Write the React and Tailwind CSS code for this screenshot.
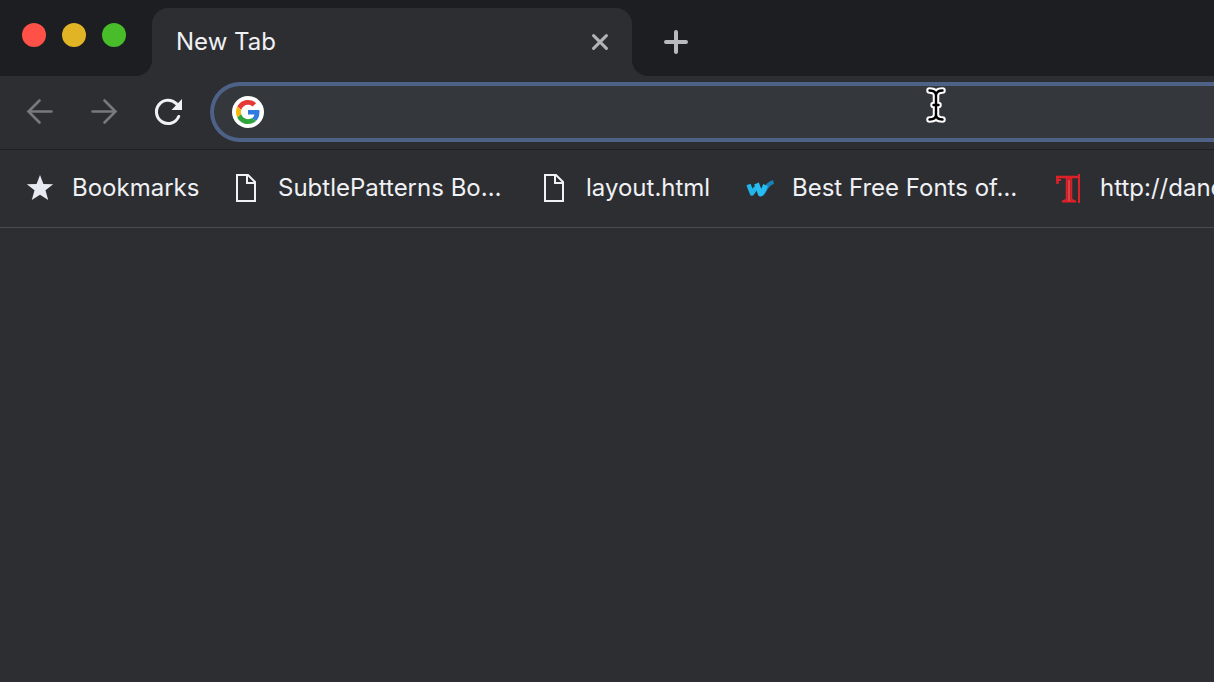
import { useState } from "react";

function BackIcon() {
  return (
    <svg viewBox="0 0 32 32" className="size-8" fill="none" stroke="currentColor" strokeWidth="2.6" strokeLinecap="round" aria-hidden="true">
      <path d="M27.500 15.500H4.500M15.500 4.500 4.500 15.500 15.500 26.500" />
    </svg>
  );
}

function ForwardIcon() {
  return (
    <svg viewBox="0 0 32 32" className="size-8" fill="none" stroke="currentColor" strokeWidth="2.6" strokeLinecap="round" aria-hidden="true">
      <path d="M4.500 15.500h23M16.500 4.500l11 11-11 11" />
    </svg>
  );
}

function ReloadIcon() {
  return (
    <svg viewBox="0 0 32 32" className="size-8" fill="none" aria-hidden="true">
      <path d="M26.700 20.500A11.600 11.600 0 1 1 24.300 7.700L26 9.500" stroke="currentColor" strokeWidth="3.100" strokeLinecap="round" />
      <path d="M30 3v11H19.500z" fill="currentColor" />
    </svg>
  );
}

function CloseIcon() {
  return (
    <svg viewBox="0 0 16 16" className="size-4" stroke="currentColor" strokeWidth="3" strokeLinecap="round" aria-hidden="true">
      <path d="m1.600 1.600 12.800 12.800M14.400 1.600 1.600 14.400" />
    </svg>
  );
}

function PlusIcon() {
  return (
    <svg viewBox="0 0 24 24" className="size-6" stroke="currentColor" strokeWidth="4" strokeLinecap="round" aria-hidden="true">
      <path d="M12 2v20M2 12h20" />
    </svg>
  );
}

function GoogleIcon() {
  return (
    <svg viewBox="0 0 48 48" className="size-6" aria-hidden="true">
      <path fill="#e53935" d="M24 9.500c3.540 0 6.710 1.220 9.210 3.600l6.850-6.850C35.900 2.380 30.470 0 24 0 14.620 0 6.510 5.380 2.560 13.220l7.980 6.190C12.430 13.720 17.740 9.500 24 9.500z" />
      <path fill="#2f7be0" d="M46.980 24.550c0-1.570-.15-3.090-.38-4.550H24v9.020h12.940c-.58 2.960-2.260 5.480-4.780 7.180l7.730 6c4.510-4.180 7.090-10.360 7.090-17.650z" />
      <path fill="#f6b60b" d="M10.530 28.590c-.48-1.450-.76-2.990-.76-4.590s.27-3.140.76-4.590l-7.980-6.190C.92 16.460 0 20.120 0 24c0 3.880.92 7.540 2.560 10.780l7.970-6.190z" />
      <path fill="#2fa33c" d="M24 48c6.480 0 11.930-2.130 15.890-5.810l-7.730-6c-2.150 1.450-4.920 2.300-8.160 2.300-6.260 0-11.570-4.220-13.470-9.910l-7.980 6.190C6.510 42.620 14.620 48 24 48z" />
    </svg>
  );
}

function StarIcon() {
  return (
    <svg viewBox="0 0 32 32" className="size-8" fill="#e8eaf2" aria-hidden="true">
      <path d="m16 3 3.400 8.900 9.800.4-7.700 6 2.700 9.700L16 22.700 7.800 28l2.700-9.700-7.700-6 9.800-.4z" />
    </svg>
  );
}

function PageIcon() {
  return (
    <svg viewBox="0 0 32 32" className="size-8" fill="none" stroke="#f1f1f5" strokeWidth="2" aria-hidden="true">
      <path d="M7 3h11l7 7v19H7zM17 3v8h8" />
    </svg>
  );
}

function FontsIcon() {
  return (
    <svg viewBox="0 0 32 32" className="size-8" fill="none" strokeLinejoin="round" aria-hidden="true">
      <path d="M17.500 22.500c5-3 3-10 12-12.500" stroke="#1a82b5" strokeWidth="4" />
      <path d="m4.500 12.500 3.500 9 4-6" stroke="#22b5e8" strokeWidth="4.500" />
      <path d="m12.500 11.500 4 10.500c3-2 3.500-5 5-9" stroke="#25bdf2" strokeWidth="5" />
    </svg>
  );
}

function TypeIcon() {
  return (
    <svg viewBox="0 0 32 32" className="size-8" fill="none" stroke="#de2027" aria-hidden="true">
      <path d="M4 5h24M5.500 4v8" strokeWidth="2.500" />
      <path d="M4 8h5M10 29.500h14" strokeWidth="2" />
      <path d="M14.500 6v21l-3 2h11l-3-2V6z" fill="#b6232a" strokeWidth="1.500" />
      <path d="M17 8v21" stroke="#f06a6d" strokeWidth="1" />
      <path d="M27 2v29" strokeWidth="2" />
    </svg>
  );
}

function TextCursor() {
  return (
    <svg viewBox="0 0 20 38" className="pointer-events-none absolute left-[926px] top-[86px] h-[38px] w-5" fill="none" strokeLinecap="round" strokeLinejoin="round" aria-hidden="true">
      <path d="M3.500 4.500c4 0 6.500 1.500 6.500 5 0-3.500 2.500-5 6.500-5M10 9v20M3.500 33.500c4 0 6.500-1.500 6.500-5 0 3.500 2.500 5 6.500 5M7.500 19h5" stroke="#fff" strokeWidth="6.500" />
      <path d="M3.500 4.500c4 0 6.500 1.500 6.500 5 0-3.500 2.500-5 6.500-5M10 9v20M3.500 33.500c4 0 6.500-1.500 6.500-5 0 3.500 2.500 5 6.500 5M7.500 19h5" stroke="#000" strokeWidth="2.400" />
    </svg>
  );
}

const bookmarks = [
  { label: "Bookmarks", Icon: StarIcon, width: "w-[126px]" },
  { label: "SubtlePatterns Bo…", Icon: PageIcon, width: "w-[228px]" },
  { label: "layout.html", Icon: PageIcon, width: "w-[126px]" },
  { label: "Best Free Fonts of…", Icon: FontsIcon, width: "w-[228px]" },
  { label: "http://danc", Icon: TypeIcon, width: "w-[228px]" },
];

function TabStrip() {
  return (
    <div className="flex h-[76px] items-end bg-[#1d1e21]">
      <div className="flex w-[136px] shrink-0 gap-4 self-start pl-[22px] pt-[23px]">
        <button aria-label="Close window" className="size-6 rounded-full bg-[#ff5147]" />
        <button aria-label="Minimize window" className="size-6 rounded-full bg-[#e1b426]" />
        <button aria-label="Zoom window" className="size-6 rounded-full bg-[#48bc29]" />
      </div>
      <div className="size-4 shrink-0 bg-[#2d2e32]">
        <div className="size-4 rounded-br-2xl bg-[#1d1e21]" />
      </div>
      <div className="flex h-[68px] w-[480px] shrink-0 items-center justify-between rounded-t-2xl bg-[#2d2e32] px-6">
        <span className="text-[#f0f1f4]">New Tab</span>
        <button aria-label="Close tab" className="text-[#b0b3b8]">
          <CloseIcon />
        </button>
      </div>
      <div className="size-4 shrink-0 bg-[#2d2e32]">
        <div className="size-4 rounded-bl-2xl bg-[#1d1e21]" />
      </div>
      <button aria-label="New tab" className="flex h-[68px] items-center px-4 text-[#b7babf]">
        <PlusIcon />
      </button>
    </div>
  );
}

function Toolbar() {
  const [address, setAddress] = useState("");
  return (
    <div className="flex items-center border-b border-[#1f2023] pb-[7px] pl-6 pt-[6px]">
      <div className="flex shrink-0 gap-8 text-[#78797c]">
        <button aria-label="Back">
          <BackIcon />
        </button>
        <button aria-label="Forward">
          <ForwardIcon />
        </button>
        <button aria-label="Reload" className="text-[#f1f1f4]">
          <ReloadIcon />
        </button>
      </div>
      <div className="ml-[26px] flex h-[60px] min-w-0 flex-1 items-center gap-4 rounded-l-full border-4 border-r-0 border-[#4e6186] bg-[#34373b] pl-[18px]">
        <span className="flex size-8 shrink-0 items-center justify-center rounded-full bg-white">
          <GoogleIcon />
        </span>
        <input
          aria-label="Address and search bar"
          value={address}
          onChange={(e) => setAddress(e.target.value)}
          className="min-w-0 flex-1 bg-transparent text-[#f0f1f4] outline-none"
        />
      </div>
    </div>
  );
}

function BookmarksBar() {
  return (
    <nav aria-label="Bookmarks" className="flex h-[78px] items-center gap-8 overflow-hidden border-b border-[#4a4b4f] pb-0.5 pl-6">
      {bookmarks.map(({ label, Icon, width }) => (
        <a key={label} href="#" className="flex shrink-0 items-center gap-4 text-[#f0f1f4]">
          <Icon />
          <span className={`${width} whitespace-nowrap`}>{label}</span>
        </a>
      ))}
    </nav>
  );
}

export default function App() {
  return (
    <div className="relative flex min-h-screen flex-col overflow-hidden bg-[#2d2e32] font-['Inter','Liberation_Sans',sans-serif] text-2xl">
      <TabStrip />
      <Toolbar />
      <BookmarksBar />
      <main className="flex-1" />
      <TextCursor />
    </div>
  );
}
